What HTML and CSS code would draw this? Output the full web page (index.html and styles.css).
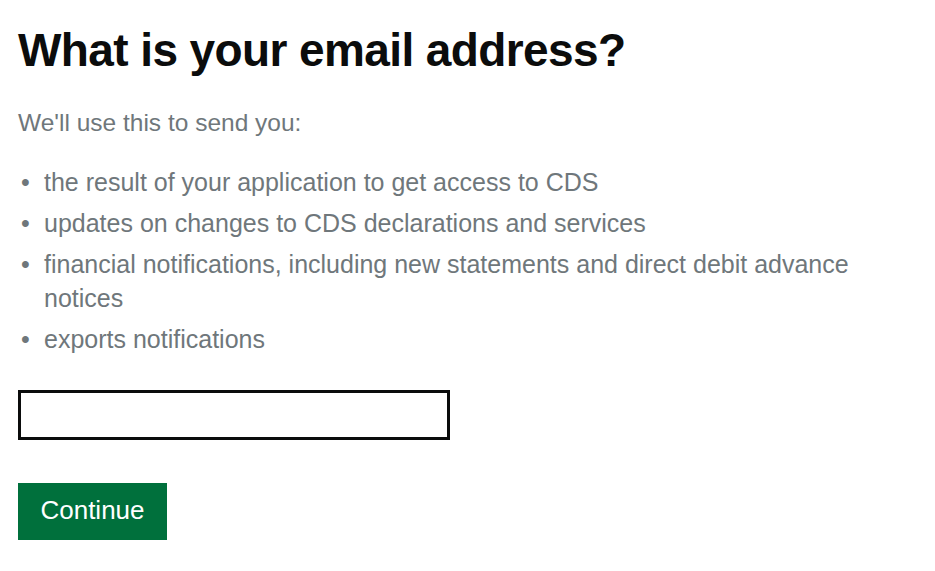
FILE: index.html
```html
<!DOCTYPE html>
<html lang="en">
<head>
<meta charset="utf-8">
<title>What is your email address?</title>
<link rel="stylesheet" href="styles.css">
</head>
<body>
<main class="page">
  <h1 class="heading">What is your email address?</h1>
  <p class="intro">We'll use this to send you:</p>
  <ul class="list">
    <li>the result of your application to get access to CDS</li>
    <li>updates on changes to CDS declarations and services</li>
    <li>financial notifications, including new statements and direct debit advance notices</li>
    <li>exports notifications</li>
  </ul>
  <input class="input" type="email" aria-label="Email address">
  <div class="actions">
    <button class="button" type="button">Continue</button>
  </div>
</main>
</body>
</html>
```

FILE: styles.css
```css
*, *::before, *::after { box-sizing: border-box; }
html, body { margin: 0; padding: 0; background: #ffffff; }
body {
  font-family: "Liberation Sans", Arial, sans-serif;
  color: #6f777b;
}
.page {
  padding: 22px 18px 0 18px;
  display: flex;
  flex-direction: column;
  align-items: flex-start;
}
.heading {
  margin: 0;
  font-size: 46px;
  line-height: 56px;
  font-weight: 700;
  color: #0b0c0c;
  letter-spacing: -0.6px;
}
.intro {
  margin: 30px 0 0 0;
  font-size: 24.5px;
  line-height: 30px;
}
.list {
  list-style: none;
  margin: 27px 0 0 0;
  padding: 0;
  font-size: 25px;
  line-height: 34px;
  max-width: 880px;
}
.list li {
  display: flex;
  margin-bottom: 7px;
}
.list li::before {
  content: "\2022";
  flex: 0 0 26px;
  padding-left: 3px;
  color: #6f777b;
}
.input {
  margin-top: 27px;
  width: 432px;
  height: 50px;
  border: 3px solid #0b0c0c;
  background: #ffffff;
  border-radius: 0;
}
.actions { margin-top: 43px; }
.button {
  width: 149px;
  height: 57px;
  padding: 0 0 2px 0;
  border: 0;
  border-radius: 0;
  background: #00703c;
  color: #ffffff;
  font-family: inherit;
  font-size: 26px;
  box-shadow: 0 3px 0 #002d18;
  margin: 0;
}
```
